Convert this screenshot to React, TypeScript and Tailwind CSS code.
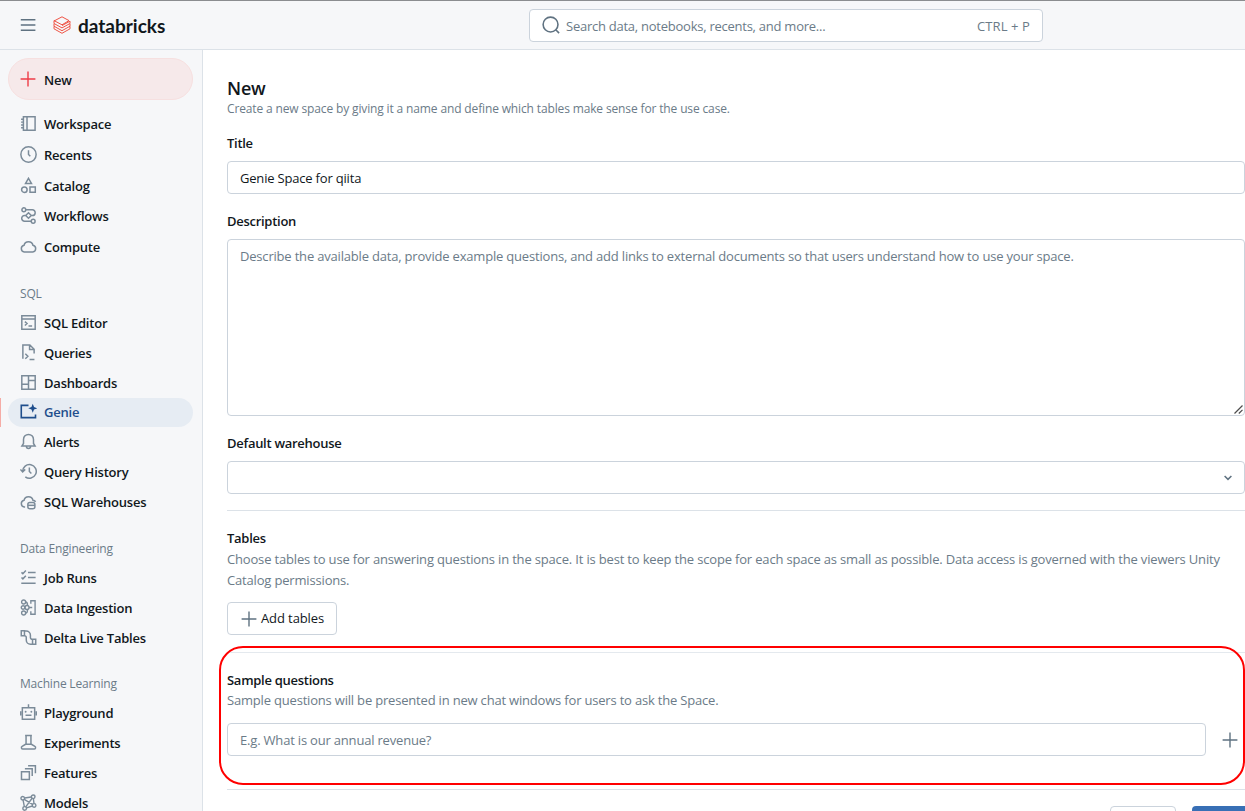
import type { ReactNode } from "react";
import { clsx } from "clsx";

type Item = {
  label: string;
  icon: ReactNode;
  height?: string;
  active?: boolean;
};

const Icon = ({
  children,
  className = "size-[17px]",
  width = 1.4,
}: {
  children: ReactNode;
  className?: string;
  width?: number;
}) => (
  <svg
    viewBox="0 0 16 16"
    fill="none"
    stroke="currentColor"
    strokeWidth={width}
    className={clsx("shrink-0", className)}
  >
    {children}
  </svg>
);

const mainItems: Item[] = [
  {
    label: "Workspace",
    height: "h-[31px]",
    icon: (
      <Icon>
        <path d="M3.2 1.7h11v12.6h-11zM6.6 1.7v12.6M1 4h2.2M1 6.7h2.2M1 9.3h2.2M1 12h2.2" />
      </Icon>
    ),
  },
  {
    label: "Recents",
    height: "h-[31px]",
    icon: (
      <Icon>
        <circle cx="8" cy="8" r="7.2" />
        <path d="M8 3.9V8l1.7 1.7" />
      </Icon>
    ),
  },
  {
    label: "Catalog",
    height: "h-[30px]",
    icon: (
      <Icon>
        <path d="M8 1.2l2.8 4.9H5.2zM9.4 9.4h5v5h-5z" />
        <circle cx="4.1" cy="11.9" r="2.6" />
      </Icon>
    ),
  },
  {
    label: "Workflows",
    height: "h-[31px]",
    icon: (
      <Icon>
        <circle cx="3.6" cy="2.6" r="1.8" />
        <circle cx="12.4" cy="13.4" r="1.8" />
        <path d="M5.4 2.6h6.2a2.7 2.7 0 0 1 0 5.4h-1M10.6 13.4H4.3a2.7 2.7 0 0 1 0-5.4h1.1M8 5.4L10.6 8 8 10.6 5.4 8z" />
      </Icon>
    ),
  },
  {
    label: "Compute",
    height: "h-[31px]",
    icon: (
      <Icon>
        <path d="M4 13.2a3.2 3.2 0 0 1-.2-6.3 4.3 4.3 0 0 1 8.4 0 3.2 3.2 0 0 1-.2 6.3z" />
      </Icon>
    ),
  },
];

const sqlItems: Item[] = [
  {
    label: "SQL Editor",
    icon: (
      <Icon>
        <path d="M1.7 1.7h12.6v12.6H1.7zM1.7 4.8h12.6M4.6 7.2L6.6 9l-2 1.8M8 11.2h3.4" />
      </Icon>
    ),
  },
  {
    label: "Queries",
    icon: (
      <Icon>
        <path d="M2.7 13.8V.9h6.6l4 4V9M9 .9v4.3h4.3M5 9.2l2.4 2.3L5 13.8M9 14.6h4.6" />
      </Icon>
    ),
  },
  {
    label: "Dashboards",
    icon: (
      <Icon>
        <path d="M1.7 1.7h12.6v12.6H1.7zM8 1.7v12.6M1.7 9.6H8M8 6.2h6.3" />
      </Icon>
    ),
  },
  {
    label: "Genie",
    height: "h-[29px]",
    active: true,
    icon: (
      <Icon width={1.5}>
        <path d="M8 2.2H1.2v11.6h13.4v-3" />
        <path
          d="M12 .8l1.2 3 3 1.2-3 1.2-1.2 3-1.2-3-3-1.2 3-1.2z"
          fill="currentColor"
          stroke="none"
        />
      </Icon>
    ),
  },
  {
    label: "Alerts",
    icon: (
      <Icon>
        <path d="M1.8 12.3h12.4l-1.5-2.4V6a4.7 4.7 0 0 0-9.4 0v3.9zM6 12.5a2 2 0 0 0 4 0" />
      </Icon>
    ),
  },
  {
    label: "Query History",
    icon: (
      <Icon>
        <path d="M2.5 8A6.4 6.4 0 1 1 5 13M.4 6l2.1 2.4L4.9 6M8.8 4.2V8l1.9 1.9" />
      </Icon>
    ),
  },
  {
    label: "SQL Warehouses",
    icon: (
      <Icon>
        <path d="M4.8 13.2H4a3.2 3.2 0 0 1-.2-6.3 4.3 4.3 0 0 1 8.4 0q1.7.2 2.5 1.5" />
        <rect x="7.4" y="8.9" width="6.6" height="5.9" rx="1.8" />
        <path d="M7.4 11.6h6.6" />
      </Icon>
    ),
  },
];

const dataItems: Item[] = [
  {
    label: "Job Runs",
    icon: (
      <Icon>
        <path d="M7.5 3.2h7.2M7.5 8h7.2M1.2 13.4h13.5M1.4 3.2l1.3 1.3 2.8-3M1.4 8l1.3 1.3 2.8-3" />
      </Icon>
    ),
  },
  {
    label: "Data Ingestion",
    icon: (
      <Icon width={1.3}>
        <circle cx="3.4" cy="2.8" r="1.9" />
        <circle cx="3.4" cy="13.2" r="1.9" />
        <circle cx="6.6" cy="8" r="1.9" />
        <circle cx="2.9" cy="8" r="1.7" />
        <path d="M5.3 2.8q1.8 0 1.8 3.3M5.3 13.2q1.8 0 1.8-3.3M8.5 8h3M10.2 4.4V1.7h4v12.6h-4v-2.7" />
      </Icon>
    ),
  },
  {
    label: "Delta Live Tables",
    icon: (
      <Icon>
        <path d="M1.2 1.7h3v4.6h-3zM11.8 9.7h3v4.6h-3zM4.2 1.8h1.6a4 4 0 0 1 4 4v2.1a1.8 1.8 0 0 0 2 1.8M4.2 6.3a1.6 1.6 0 0 1 1.7 1.7v2.3a4 4 0 0 0 4 4h1.9" />
      </Icon>
    ),
  },
];

const mlItems: Item[] = [
  {
    label: "Playground",
    icon: (
      <Icon>
        <path d="M2.2 3.6h11.6v10.7H2.2zM8 .2v3.4M.6 6.8v4M15.4 6.8v4M5.2 10.6h5.6" />
        <circle cx="5.3" cy="7.3" r=".9" fill="currentColor" stroke="none" />
        <circle cx="10.7" cy="7.3" r=".9" fill="currentColor" stroke="none" />
      </Icon>
    ),
  },
  {
    label: "Experiments",
    icon: (
      <Icon>
        <path d="M4.8 1.4h6.4M5.7 1.4v8L2 11.6a1.4 1.4 0 0 0 .8 2.6h10.4a1.4 1.4 0 0 0 .8-2.6l-3.7-2.2v-8M5 9.7h6" />
      </Icon>
    ),
  },
  {
    label: "Features",
    icon: (
      <Icon>
        <path d="M1.4 7.2h7.4v7.4H1.4zM4.6 4.4h6.9v7M7.6 1.6h6.9v7" />
      </Icon>
    ),
  },
  {
    label: "Models",
    icon: (
      <Icon width={1.3}>
        <circle cx="2.6" cy="4" r="1.7" />
        <circle cx="12.4" cy="2.6" r="1.7" />
        <circle cx="13.3" cy="10.8" r="1.7" />
        <circle cx="4.4" cy="13.6" r="1.7" />
        <path d="M4.3 3.8l6.4-1M12.6 4.3l.6 4.8M11.7 11.3l-5.6 1.8M2.9 5.7l1.2 6.2M4 5l7.8 4.8M11.4 4l-6 8.2" />
      </Icon>
    ),
  },
];

const NavItem = ({ label, icon, height = "h-[30px]", active }: Item) => (
  <li className={clsx("relative flex", height)}>
    {active && <span className="absolute left-0 top-0 h-full w-px bg-[#f5aca6]" />}
    <a
      className={clsx(
        "ml-2 flex w-[185px] items-center gap-[7px] rounded-full pl-3",
        active ? "bg-[#e6ecf3] text-[#1f4e8c]" : "text-[#7b8b99]"
      )}
    >
      <span className="-mt-0.5">{icon}</span>
      <span
        className={clsx(
          "mt-px font-semibold tracking-[-0.22px]",
          active ? "text-[#1f4e8c]" : "text-[#11171c]"
        )}
      >
        {label}
      </span>
    </a>
  </li>
);

const NavGroup = ({
  title,
  items,
  className,
}: {
  title?: string;
  items: Item[];
  className?: string;
}) => (
  <div className={className}>
    {title && (
      <h3 className="flex h-[30px] items-center pt-px pl-5 text-[12px] tracking-[-0.18px] text-[#6b7b88]">
        {title}
      </h3>
    )}
    <ul>
      {items.map((item) => (
        <NavItem key={item.label} {...item} />
      ))}
    </ul>
  </div>
);

const Plus = ({ className }: { className?: string }) => (
  <Icon className={className} width={1.4}>
    <path d="M8 .6v14.8M.6 8h14.8" />
  </Icon>
);

const Header = () => (
  <header className="flex h-[50px] shrink-0 items-center border-t border-b border-t-[#8b8d90] border-b-[#dce2e8] bg-[#f6f7f9]">
    <Icon className="ml-5 size-4 text-[#5f7281]" width={1.4}>
      <path d="M.8 2.7h14.6M.8 8h14.6M.8 13.3h14.6" />
    </Icon>
    <svg
      viewBox="0 0 18 18"
      fill="none"
      stroke="#ee4b3c"
      strokeWidth="0.95"
      className="ml-[17px] size-[18px]"
    >
      <path d="M1 5L9 .8l7 3.8L9 8.8 1 4.6v2.9l8 4.4 8-4.4V5.2L9 9.6" />
      <path d="M1 7.8v2.4l8 4.5 8-4.5V7.8M1 10.4v2.4l8 4.5 8-4.5v-2.4" />
    </svg>
    <span className="ml-[7px] w-[90px] font-['Lato'] text-[19px] leading-none font-bold text-[#11171c]">
      databricks
    </span>
    <div className="ml-[361px] flex h-[33px] w-[514px] items-center rounded-sm border border-[#cbd3dc] bg-white px-3 text-[#6b7b88]">
      <Icon className="size-[18px] text-[#5f7281]" width={1.4}>
        <circle cx="7.6" cy="7.6" r="6.6" />
        <path d="M12.2 12.2l3 3" />
      </Icon>
      <span className="mt-[3px] ml-1.5 tracking-[-0.25px]">
        Search data, notebooks, recents, and more...
      </span>
      <span className="mt-[3px] ml-auto tracking-[0.1px]">CTRL + P</span>
    </div>
  </header>
);

const Sidebar = () => (
  <aside className="w-[203px] shrink-0 overflow-hidden border-r border-[#dce2e8] bg-[#f6f7f9] pt-2">
    <button className="ml-2 flex h-[42px] w-[185px] items-center gap-2 rounded-full border border-[#f6e0e0] bg-[#f6e9ea] pl-[11px] font-semibold text-[#11171c]">
      <Plus className="size-[16px] text-[#ee3d48]" />
      <span className="mt-[3px] tracking-[-0.22px]">New</span>
    </button>
    <nav className="mt-[9px]">
      <NavGroup items={mainItems} />
      <NavGroup title="SQL" items={sqlItems} className="mt-[15px]" />
      <NavGroup title="Data Engineering" items={dataItems} className="mt-4" />
      <NavGroup title="Machine Learning" items={mlItems} className="mt-[15px]" />
    </nav>
  </aside>
);

const Label = ({ children }: { children: ReactNode }) => (
  <h2 className="h-5 leading-5 font-semibold tracking-[-0.28px] text-[#11171c]">{children}</h2>
);

const Main = () => (
  <main className="relative flex min-w-0 flex-1 flex-col pt-[27px] pl-6 tracking-[-0.19px]">
    <h1 className="h-[22px] text-[18px] leading-[22px] font-semibold text-[#11171c]">New</h1>
    <p className="h-5 text-[12px] leading-[19px] tracking-[-0.14px] text-[#6b7b88]">
      Create a new space by giving it a name and define which tables make sense for the use case.
    </p>

    <div className="mt-[15px]">
      <Label>Title</Label>
      <div className="mt-2 flex h-[33px] items-center rounded-sm border border-[#cbd3dc] px-3 pt-[3px] text-[#11171c]">
        Genie Space for qiita
      </div>
    </div>

    <div className="mt-[17px]">
      <Label>Description</Label>
      <div className="relative mt-2 h-[177px] rounded-sm border border-[#cbd3dc] px-3 pt-1.5 leading-5 text-[#6b7b88]">
        Describe the available data, provide example questions, and add links to external documents
        so that users understand how to use your space.
        <svg
          viewBox="0 0 9 9"
          stroke="#4c4c4c"
          strokeWidth="1.2"
          className="absolute right-px bottom-px size-[9px]"
        >
          <path d="M.5 8.5l8-8M4.8 8.5l3.7-3.7" />
        </svg>
      </div>
    </div>

    <div className="mt-[17px]">
      <Label>Default warehouse</Label>
      <div className="mt-2 flex h-[33px] items-center justify-end rounded-sm border border-[#cbd3dc] pr-3 text-[#5f7281]">
        <svg
          viewBox="0 0 8 6"
          fill="none"
          stroke="currentColor"
          strokeWidth="1.5"
          className="h-1.5 w-2"
        >
          <path d="M.6 1L4 4.4 7.4 1" />
        </svg>
      </div>
    </div>

    <section className="mt-4 border-t border-[#dce2e8] pt-[17px]">
      <Label>Tables</Label>
      <p className="mt-px h-[41px] leading-[20.5px] tracking-[-0.17px] whitespace-nowrap text-[#6b7b88]">
        Choose tables to use for answering questions in the space. It is best to keep the scope for
        each space as small as possible. Data access is governed with the viewers Unity
        <br />
        Catalog permissions.
      </p>
      <button className="mt-3 flex h-[33px] w-[110px] items-center gap-1 rounded-sm border border-[#cbd3dc] pl-[13px] whitespace-nowrap text-[#11171c]">
        <Plus className="size-4 text-[#5f7281]" />
        <span className="mt-px tracking-[-0.1px]">Add tables</span>
      </button>
    </section>

    <section className="mt-[17px] border-t border-[#e4e9ee] pt-[17px]">
      <Label>Sample questions</Label>
      <p className="h-5 leading-[21px] text-[#6b7b88]">
        Sample questions will be presented in new chat windows for users to ask the Space.
      </p>
      <div className="mt-[13px] flex items-center">
        <div className="flex h-[33px] w-[979px] items-center rounded-sm border border-[#cbd3dc] px-3 pt-[3px] text-[#6b7b88]">
          E.g. What is our annual revenue?
        </div>
        <Plus className="ml-4 size-4 text-[#5f7281]" />
      </div>
    </section>

    <footer className="mt-[33px] flex gap-4 border-t border-[#dce2e8] pt-4 pl-[883px]">
      <button className="h-8 w-[66px] shrink-0 rounded-sm border border-[#cbd3dc]" />
      <button className="h-8 w-[66px] shrink-0 rounded-sm bg-[#386fb5]" />
    </footer>

    {/* highlight around the sample questions block */}
    <div className="absolute top-[596px] left-4 h-[139px] w-[1026px] rounded-[24px] border-2 border-[#ff0000]" />
  </main>
);

const App = () => {
  return (
    <div className="flex h-[811px] w-[1245px] flex-col overflow-hidden bg-white font-['Open_Sans','Noto_Sans',sans-serif] text-[13px]">
      <Header />
      <div className="flex min-h-0 flex-1">
        <Sidebar />
        <Main />
      </div>
    </div>
  );
};

export default App;
